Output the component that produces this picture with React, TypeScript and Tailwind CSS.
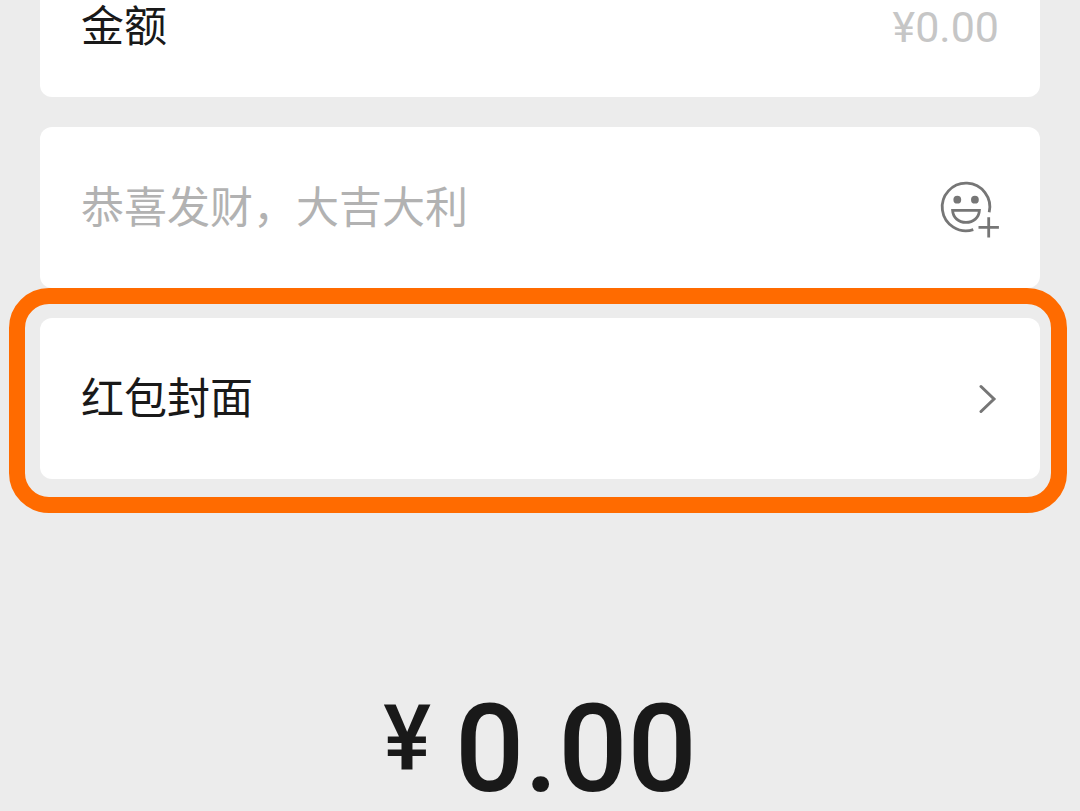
import React, { useState } from 'react';

const SmileyPlusIcon: React.FC = () => (
  <svg viewBox="0 -2 60 60" className="w-[60px] h-[60px]" fill="none" stroke="#767676" strokeWidth="2.8" aria-hidden="true">
    <path d="M50.2 32.3A23.8 23.8 0 1 0 34.3 49.6" />
    <circle cx="18.3" cy="19.7" r="3.9" fill="#767676" stroke="none" />
    <circle cx="35.9" cy="19.7" r="3.9" fill="#767676" stroke="none" />
    <path d="M13.6 30.4H40.4C40 37.6 34.4 42.4 27 42.4S14 37.6 13.6 30.4Z" />
    <path d="M49.7 37.2V57.6M39.5 47.4H59.9" />
  </svg>
);

const ChevronIcon: React.FC = () => (
  <svg viewBox="0 0 20 32" className="w-[20px] h-[32px]" fill="none" stroke="#767676" strokeWidth="3" strokeLinecap="round" aria-hidden="true">
    <path d="M2 3.5L15 16L2 28.5" />
  </svg>
);

const App: React.FC = () => {
  const [amount, setAmount] = useState('');
  const [greeting, setGreeting] = useState('');

  return (
    <main className="bg-[#ececec] text-[#191919] px-10 font-[Roboto,'Noto_Sans_CJK_SC',sans-serif] text-[43px] leading-[54px]">
      <div className="flex flex-col gap-[30px]">
        {/* Amount */}
        <div className="flex items-center justify-between bg-white rounded-b-xl px-[41px] pb-[43px]">
          <label htmlFor="amount">金额</label>
          <input
            id="amount"
            className="flex-1 min-w-0 h-[54px] text-right outline-none placeholder:text-[#c6c6c6]"
            placeholder="¥0.00"
            inputMode="decimal"
            value={amount}
            onChange={(e) => setAmount(e.target.value)}
          />
        </div>

        {/* Greeting */}
        <div className="flex items-center justify-between bg-white rounded-xl h-[161px] px-[41px]">
          <input
            aria-label="祝福语"
            className="flex-1 min-w-0 h-[54px] outline-none placeholder:text-[#b2b2b2]"
            placeholder="恭喜发财，大吉大利"
            value={greeting}
            onChange={(e) => setGreeting(e.target.value)}
          />
          <button type="button" aria-label="添加表情">
            <SmileyPlusIcon />
          </button>
        </div>

        {/* Cover, with highlight ring */}
        <div className="relative">
          <button type="button" className="flex w-full items-center justify-between bg-white rounded-xl h-[161px] px-[41px]">
            <span>红包封面</span>
            <ChevronIcon />
          </button>
          <div className="absolute -left-[31px] -right-[27px] -top-[30px] -bottom-[34px] border-[16px] border-[#ff6b00] rounded-[40px] pointer-events-none" />
        </div>
      </div>

      {/* Total */}
      <p className="flex items-start justify-center gap-6 mt-[210px] font-medium text-[122px] leading-[122px]">
        <span className="text-[90px] leading-[100px]">¥</span>
        <span>0.00</span>
      </p>
    </main>
  );
};

export default App;
